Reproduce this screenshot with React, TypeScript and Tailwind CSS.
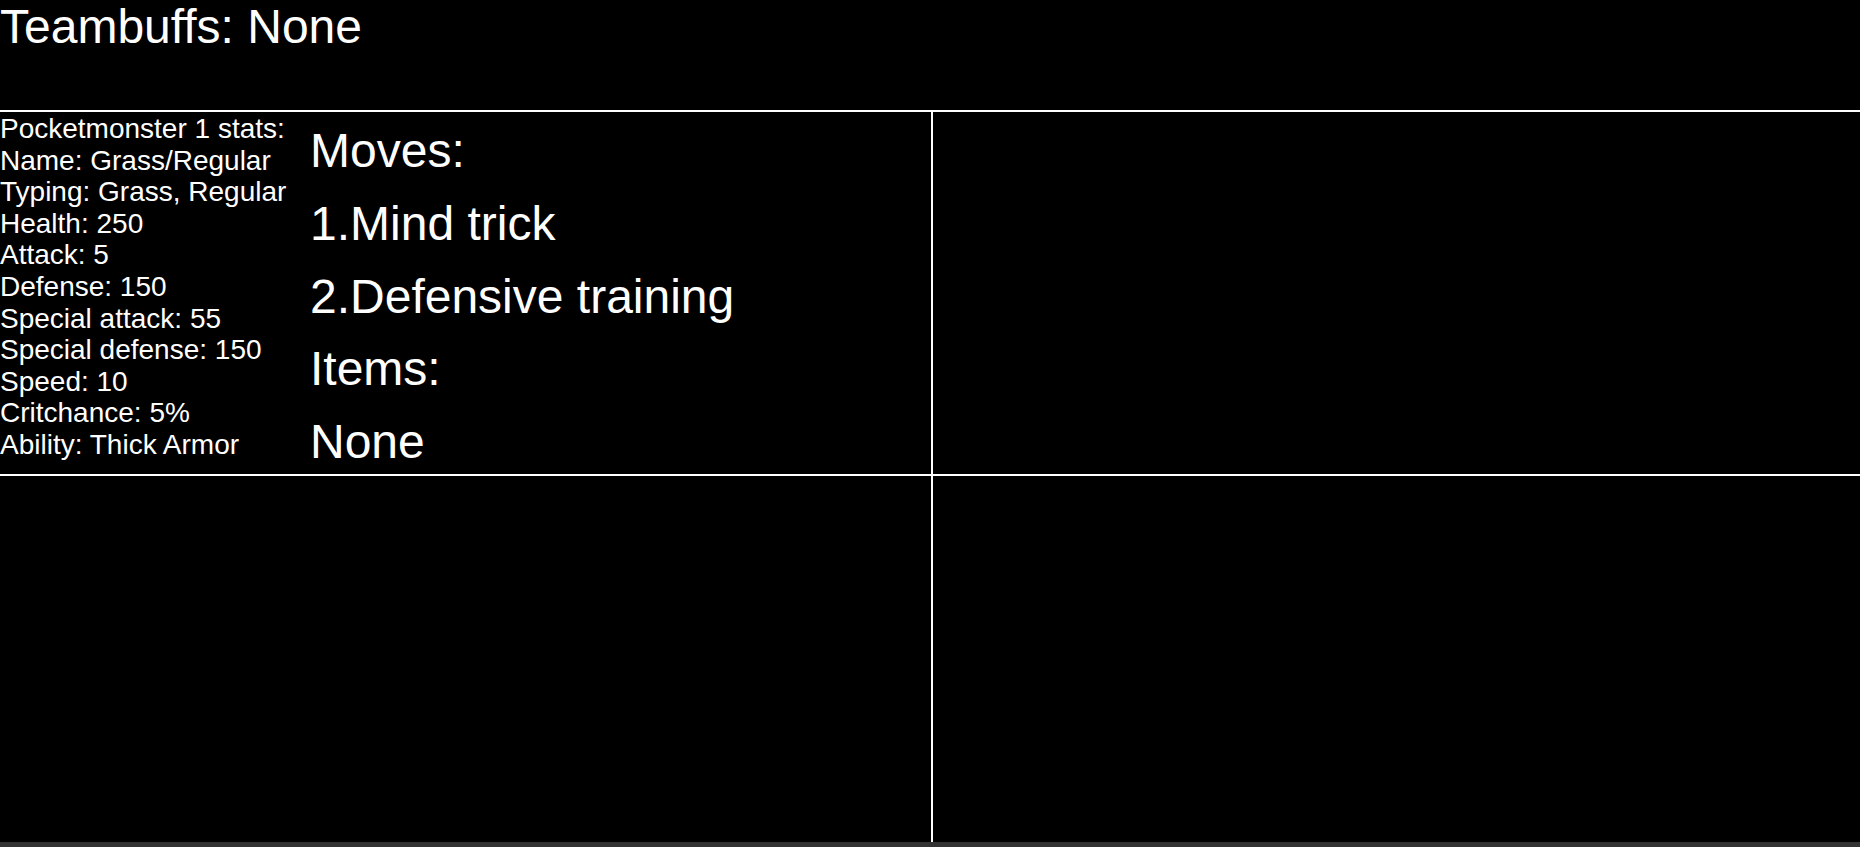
import React from 'react';

const stats = [
  'Pocketmonster 1 stats:',
  'Name: Grass/Regular',
  'Typing: Grass, Regular',
  'Health: 250',
  'Attack: 5',
  'Defense: 150',
  'Special attack: 55',
  'Special defense: 150',
  'Speed: 10',
  'Critchance: 5%',
  'Ability: Thick Armor',
];

const info = ['Moves:', '1.Mind trick', '2.Defensive training', 'Items:', 'None'];

const App = () => {
  return (
    <div className="h-screen w-full bg-black text-white flex flex-col overflow-hidden font-['Liberation_Sans',Arial,sans-serif]">
      <div className="h-[112px] shrink-0 border-b-2 border-white pt-[2.7px] text-[48px] leading-[48px]">
        Teambuffs: None
      </div>
      <div className="flex-1 grid grid-cols-[933px_1fr] grid-rows-[364px_1fr]">
        <div className="border-r-2 border-b-2 border-white flex">
          <div className="w-[310px] shrink-0 pt-px text-[28px] leading-[31.6px] whitespace-nowrap">
            {stats.map((s) => (
              <div key={s}>{s}</div>
            ))}
          </div>
          <div className="pt-[3px] text-[48px] leading-[72.8px] whitespace-nowrap">
            {info.map((s) => (
              <div key={s}>{s}</div>
            ))}
          </div>
        </div>
        <div className="border-b-2 border-white" />
        <div className="border-r-2 border-white" />
        <div />
      </div>
      <div className="h-[5px] shrink-0 bg-[#333333]" />
    </div>
  );
};

export default App;
